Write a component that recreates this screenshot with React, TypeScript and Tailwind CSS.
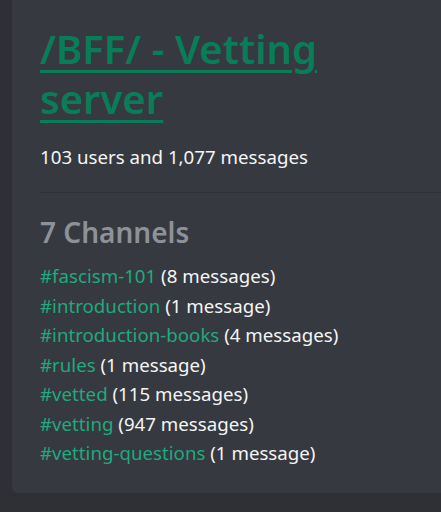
import React from "react";

const channels: [string, string][] = [
  ["#fascism-101", "(8 messages)"],
  ["#introduction", "(1 message)"],
  ["#introduction-books", "(4 messages)"],
  ["#rules", "(1 message)"],
  ["#vetted", "(115 messages)"],
  ["#vetting", "(947 messages)"],
  ["#vetting-questions", "(1 message)"],
];

export default function App() {
  return (
    <div
      className="w-[441px] h-[512px] overflow-hidden bg-[#2e3035] flex"
      style={{ fontFamily: '"Noto Sans", "Open Sans", sans-serif' }}
    >
      <div className="ml-[12px] w-[460px] h-[493px] shrink-0 bg-[#36393f] rounded-bl-[6px] flex flex-col">
        <div className="pl-[28px] pt-[24px] pb-[23px]">
          <a
            href="#"
            className="block text-[40px] leading-[50px] font-semibold text-[#087d57] underline decoration-[3px] underline-offset-[6px] w-[300px]"
          >
            /BFF/ - Vetting server
          </a>
          <div className="mt-[21px] text-[18.7px] leading-[24px] text-[#f4f5f6]">
            103 users and 1,077 messages
          </div>
        </div>
        <div className="ml-[28px] h-px bg-[#2f3237]" />
        <div className="pl-[28px] pt-[21px]">
          <div className="text-[28px] leading-[36px] font-semibold text-[#8e9297]">7 Channels</div>
          <div className="mt-[11px] flex flex-col">
            {channels.map(([name, count]) => (
              <div key={name} className="text-[18.7px] leading-[29.5px] text-[#f4f5f6]">
                <a href="#" className="text-[#20aa7d]">{name}</a> {count}
              </div>
            ))}
          </div>
        </div>
      </div>
    </div>
  );
}
